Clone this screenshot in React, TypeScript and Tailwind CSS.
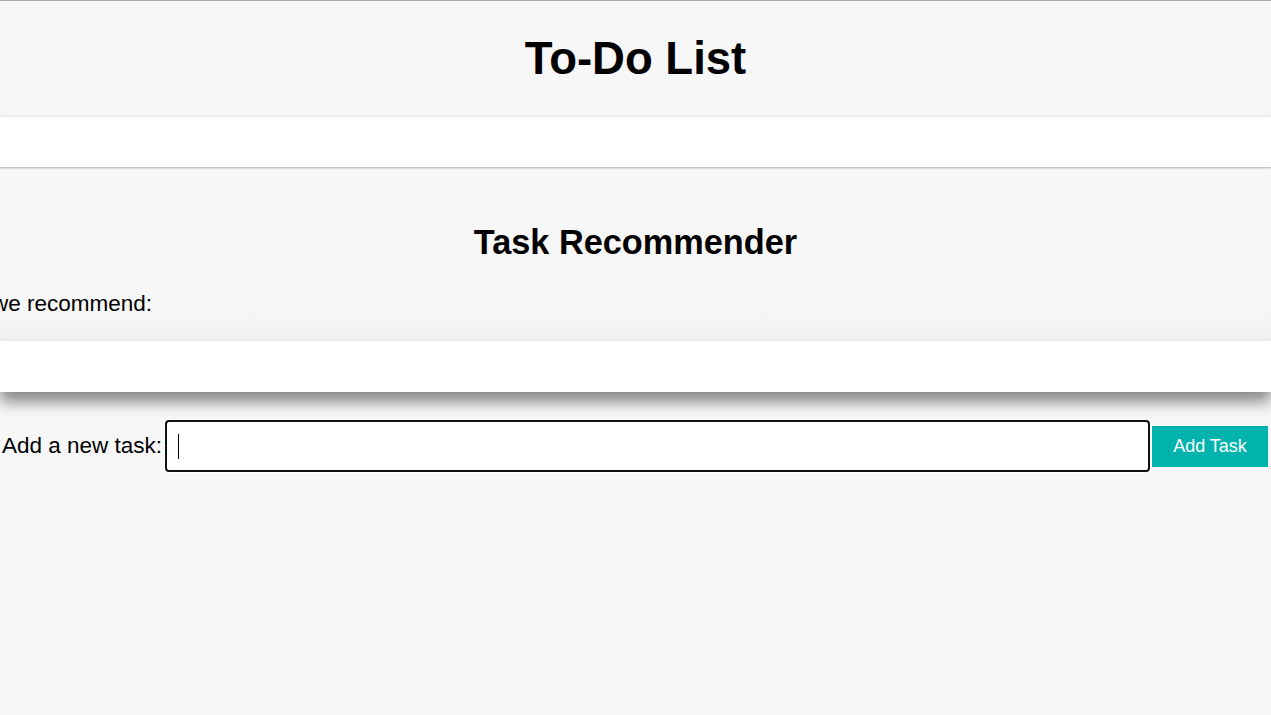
export default function App() {
  return (
    <div
      className="min-h-[715px] w-full overflow-hidden bg-[#f7f7f7] text-black border-t border-[#a9a9a9]"
      style={{ fontFamily: '"Liberation Sans", Arial, sans-serif' }}
    >
      <header className="h-[115px] flex items-center justify-center">
        <h1 className="text-[45.5px] font-bold leading-none">To-Do List</h1>
      </header>

      <div className="relative z-10 h-[51px] bg-white border-t border-[#ebebeb] shadow-[0_1px_2px_rgba(0,0,0,0.3)]" />

      <section className="pt-[56px] pb-[24px] bg-gradient-to-b from-[#f7f7f7] from-80% to-[#f1f1f1]">
        <h2 className="text-[34.3px] font-bold text-center leading-[39px]">Task Recommender</h2>
        <div className="mt-[29px] w-[152px] flex justify-end overflow-hidden">
          <p className="text-[22.5px] leading-[26px] whitespace-nowrap">Based on your list, we recommend:</p>
        </div>
      </section>

      <div className="relative h-[51px] bg-white shadow-[0_10px_14px_rgba(0,0,0,0.45)]" />

      <div className="flex items-center pt-[28px]">
        <label className="w-[163px] shrink-0 pl-[2px] text-[22.5px] leading-[26px] whitespace-nowrap">Add a new task:</label>
        <div className="ml-[2px] w-[985px] shrink-0 h-[52px] bg-white border-2 border-[#111] rounded-[4px] ring-1 ring-white flex items-center pl-[11px]">
          <span className="block w-px h-[25px] bg-black" />
        </div>
        <button className="ml-[2px] w-[116px] shrink-0 h-[41px] bg-[#00b3ad] text-white text-[18px]">Add Task</button>
      </div>
    </div>
  );
}
